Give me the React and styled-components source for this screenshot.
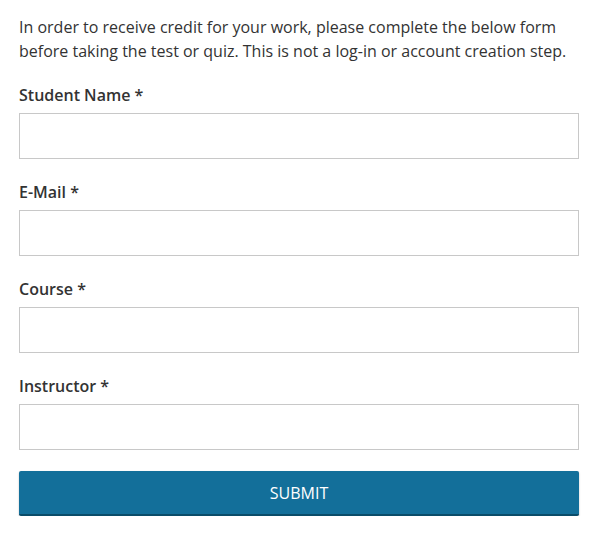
import React from "react";
import styled, { createGlobalStyle } from "styled-components";

const Global = createGlobalStyle`
  html, body { margin: 0; padding: 0; background: #fff; }
  body { font-family: "Open Sans", "Liberation Sans", sans-serif; color: #333; }
`;

const Form = styled.form`
  padding: 15px 15px 0 19px;
  display: flex;
  flex-direction: column;
`;

const Intro = styled.p`
  margin: 0 0 20px;
  font-size: 16px;
  line-height: 24px;
  color: #333;
`;

const Field = styled.div`
  display: flex;
  flex-direction: column;
  margin-bottom: 21px;
`;

const Label = styled.label`
  font-size: 16px;
  line-height: 24px;
  font-weight: 600;
  color: #333;
  margin-bottom: 6px;
`;

const Input = styled.input`
  box-sizing: border-box;
  width: 560px;
  height: 46px;
  border: 1px solid #c8c8c8;
  background: #fff;
  padding: 0 10px;
  font: inherit;
  outline: none;
`;

const Submit = styled.button`
  box-sizing: border-box;
  width: 560px;
  height: 45px;
  background: #136f9a;
  color: #fff;
  border: none;
  border-bottom: 2px solid #0a4c69;
  border-radius: 2px;
  box-shadow: 0 1px 2px rgba(0,0,0,0.25);
  font-family: "Open Sans", "Liberation Sans", sans-serif;
  font-size: 16px;
  text-transform: uppercase;
  cursor: pointer;
`;

const fields = ["Student Name", "E-Mail", "Course", "Instructor"];

export default function App() {
  return (
    <>
      <Global />
      <Form onSubmit={(e) => e.preventDefault()}>
        <Intro>
          In order to receive credit for your work, please complete the below form before taking the test or quiz. This is not a log-in or account creation step.
        </Intro>
        {fields.map((f) => (
          <Field key={f}>
            <Label>{f} *</Label>
            <Input type="text" />
          </Field>
        ))}
        <Submit type="submit">Submit</Submit>
      </Form>
    </>
  );
}
